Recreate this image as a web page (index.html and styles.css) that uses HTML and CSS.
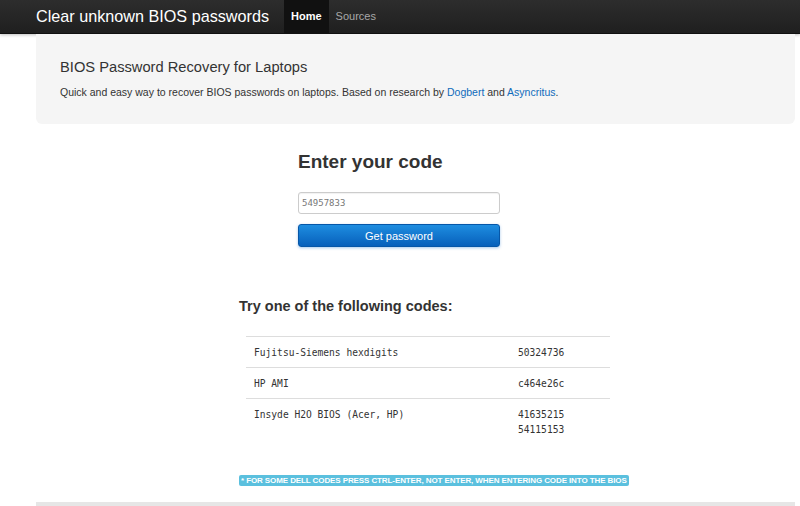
FILE: index.html
```html
<!DOCTYPE html>
<html>
<head>
<meta charset="utf-8">
<link rel="stylesheet" href="styles.css">
</head>
<body>
<div class="navbar">
  <div class="nav-inner">
    <a class="brand">Clear unknown BIOS passwords</a>
    <a class="nav-link active">Home</a>
    <a class="nav-link">Sources</a>
  </div>
</div>
<div class="container">
  <div class="hero">
    <h1>BIOS Password Recovery for Laptops</h1>
    <p>Quick and easy way to recover BIOS passwords on laptops. Based on research by <a>Dogbert</a> and <a>Asyncritus</a>.</p>
  </div>
  <div class="form-block">
    <h2>Enter your code</h2>
    <div class="input">54957833</div>
    <div class="button">Get password</div>
  </div>
  <div class="codes">
    <h3>Try one of the following codes:</h3>
    <table>
      <tr><td>Fujitsu-Siemens hexdigits</td><td class="code">50324736</td></tr>
      <tr><td>HP AMI</td><td class="code">c464e26c</td></tr>
      <tr><td>Insyde H2O BIOS (Acer, HP)</td><td class="code">41635215<br>54115153</td></tr>
    </table>
    <div class="note-row"><span class="note">* FOR SOME DELL CODES PRESS CTRL-ENTER, NOT ENTER, WHEN ENTERING CODE INTO THE BIOS</span></div>
  </div>
  <div class="footer-bar"></div>
</div>
</body>
</html>
```
FILE: styles.css
```css
html, body { margin: 0; padding: 0; background: #fff; }
body { font-family: "Liberation Sans", Arial, sans-serif; color: #333; }
.navbar {
  height: 33px;
  background: linear-gradient(#2d2d2d, #1f1f1f);
  border-bottom: 1px solid #111;
  box-shadow: 0 1px 3px rgba(0,0,0,0.25);
}
.nav-inner { display: flex; align-items: stretch; height: 33px; padding-left: 36px; }
.brand { color: #fff; font-size: 16.2px; line-height: 33px; padding-right: 15px; }
.nav-link { color: #a8a8a8; font-size: 11px; line-height: 33px; padding: 0 7px; }
.nav-link.active { color: #fff; background: #111; font-weight: bold; }
.container { margin-left: 36px; width: 759px; }
.hero {
  background: #f5f5f5;
  border-radius: 0 0 6px 6px;
  padding: 24px 24px 20px;
  height: 46px;
}
.hero h1 { margin: 0; font-size: 14.7px; font-weight: normal; color: #333; line-height: 18px; }
.hero p { margin: 9px 0 0; font-size: 10.5px; line-height: 14px; color: #333; }
.hero a { color: #0f6bbb; }
.form-block { padding: 26px 0 0 262px; width: 202px; }
.form-block h2 { margin: 0; font-size: 19px; line-height: 24px; font-weight: bold; color: #333; }
.input {
  margin-top: 18px;
  height: 20px;
  border: 1px solid #ccc;
  border-radius: 3px;
  font-family: "DejaVu Sans Mono", monospace;
  font-size: 9px;
  color: #777;
  line-height: 20px;
  padding-left: 3px;
  box-shadow: inset 0 1px 1px rgba(0,0,0,0.06);
}
.button {
  margin-top: 10px;
  height: 23px;
  line-height: 23px;
  text-align: center;
  color: #fff;
  font-size: 11px;
  border-radius: 3px;
  background: linear-gradient(#1e8de0, #0760bb);
  border: 1px solid #0657a8;
  box-sizing: border-box;
  box-shadow: 0 1px 3px rgba(0,100,200,0.35);
}
.codes { padding: 50px 0 0 203px; }
.codes h3 { margin: 0; font-size: 14.5px; line-height: 18px; font-weight: bold; color: #333; }
table {
  margin: 21px 0 0 7px;
  width: 364px;
  border-collapse: collapse;
  font-family: "DejaVu Sans Mono", monospace;
  font-size: 9.6px;
  color: #333;
}
td { border-top: 1px solid #ddd; padding: 8px 8px 7px; vertical-align: top; line-height: 15px; }
td.code { width: 84px; padding-left: 8px; }
.note-row { margin-top: 31px; display: flex; }
.note {
  background: #5bc0de;
  color: #fff;
  font-size: 8px;
  font-weight: bold;
  line-height: 11px;
  padding: 0 2px;
  border-radius: 2px;
  letter-spacing: -0.1px;
}
.footer-bar { margin-top: 16px; height: 4px; background: #e6e6e6; }
```
